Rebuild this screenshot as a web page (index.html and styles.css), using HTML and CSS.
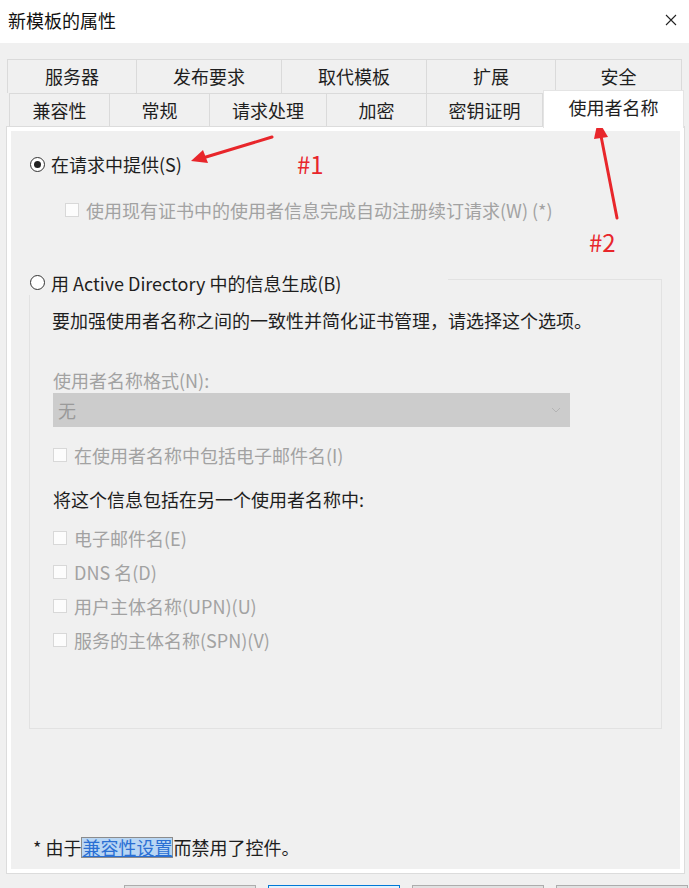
FILE: index.html
```html
<!DOCTYPE html>
<html lang="zh-CN">
<head>
    <meta charset="UTF-8">
    <meta name="viewport" content="width=device-width, initial-scale=1.0">
    <title>新模板的属性</title>
    <link rel="stylesheet" href="styles.css">
</head>
<body>
    <div class="dialog">
        <!-- title bar -->
        <div class="titlebar">
            <span class="title">新模板的属性</span>
            <svg class="close" width="12" height="12" viewBox="0 0 12 12">
                <path d="M1 1 L11 11 M11 1 L1 11" stroke="#222" stroke-width="1.1" fill="none"/>
            </svg>
        </div>

        <div class="sheet">
            <!-- tabs -->
            <div class="tabs">
                <div class="tab_row row1">
                    <div class="tab">服务器</div>
                    <div class="tab">发布要求</div>
                    <div class="tab">取代模板</div>
                    <div class="tab">扩展</div>
                    <div class="tab">安全</div>
                </div>
                <div class="tab_row row2">
                    <div class="tab">兼容性</div>
                    <div class="tab">常规</div>
                    <div class="tab">请求处理</div>
                    <div class="tab">加密</div>
                    <div class="tab">密钥证明</div>
                    <div class="tab active">使用者名称</div>
                </div>
            </div>

            <!-- tab page -->
            <div class="page">
                <div class="page_inner">
                    <div class="line radio_line first">
                        <span class="radio checked"></span>
                        <span>在请求中提供(S)</span>
                    </div>
                    <div class="line sub_line disabled">
                        <span class="check"></span>
                        <span>使用现有证书中的使用者信息完成自动注册续订请求(W) (*)</span>
                    </div>

                    <div class="group">
                        <div class="line group_label">
                            <span class="radio"></span>
                            <span>用 Active Directory 中的信息生成(B)</span>
                        </div>
                        <div class="group_body">
                            <div class="line desc">要加强使用者名称之间的一致性并简化证书管理，请选择这个选项。</div>
                            <div class="line disabled fmt_label">使用者名称格式(N):</div>
                            <div class="select">
                                <span>无</span>
                                <svg width="10" height="6" viewBox="0 0 10 6">
                                    <path d="M1 1 L5 5 L9 1" stroke="#b4b4b4" stroke-width="1" fill="none"/>
                                </svg>
                            </div>
                            <div class="line disabled email_line">
                                <span class="check"></span>
                                <span>在使用者名称中包括电子邮件名(I)</span>
                            </div>
                            <div class="line alt_label">将这个信息包括在另一个使用者名称中:</div>
                            <div class="alt_list">
                                <div class="line disabled"><span class="check"></span><span>电子邮件名(E)</span></div>
                                <div class="line disabled"><span class="check"></span><span>DNS 名(D)</span></div>
                                <div class="line disabled"><span class="check"></span><span>用户主体名称(UPN)(U)</span></div>
                                <div class="line disabled"><span class="check"></span><span>服务的主体名称(SPN)(V)</span></div>
                            </div>
                        </div>
                    </div>

                    <div class="line footer">* 由于<a class="link" href="#">兼容性设置</a>而禁用了控件。</div>
                </div>
            </div>

            <!-- dialog buttons (only their top edge is in view) -->
            <div class="buttons">
                <button class="btn"></button>
                <button class="btn default"></button>
                <button class="btn"></button>
                <button class="btn"></button>
            </div>
        </div>

        <!-- red annotations drawn over the dialog -->
        <svg class="annot" width="689" height="888" viewBox="0 0 689 888">
            <g stroke="#e8262b" stroke-width="3" stroke-linecap="round" fill="none">
                <path d="M272 137 L206 157"/>
                <path d="M617 218 L601 136"/>
            </g>
            <g fill="#e8262b">
                <polygon points="191,161 208,163 203,150"/>
                <polygon points="598,120 608,137 594,139"/>
            </g>
            <text x="297" y="174" class="mark">#1</text>
            <text x="589" y="252" class="mark">#2</text>
        </svg>
    </div>
</body>
</html>
```

FILE: styles.css
```css
*{
    margin: 0;
    padding: 0;
    box-sizing: border-box;
}
html,body{
    width: 689px;
    height: 888px;
    overflow: hidden;
}
body{
    font-family: "Noto Sans CJK SC", "Microsoft YaHei", sans-serif;
    font-size: 18px;
    color: #1e1e1e;
    background-color: #f0f0f0;
}
.dialog{
    position: relative;
    width: 689px;
    height: 888px;
}
.titlebar{
    height: 43px;
    background-color: white;
    display: flex;
    align-items: center;
    justify-content: space-between;
    padding: 0 12px 3px 8px;
}
.title{
    font-size: 18px;
    color: #111;
}
.sheet{
    padding-top: 16px;
}
/* tabs */
.tab_row{
    display: flex;
}
.tab{
    display: flex;
    align-items: center;
    justify-content: center;
    border-top: 1px solid #dadada;
    border-right: 1px solid #dadada;
    color: #1e1e1e;
}
.tab:first-child{
    border-left: 1px solid #dadada;
}
.row1{
    margin-left: 7px;
}
.row1 .tab{
    height: 34px;
    padding-bottom: 2px;
}
.row1 .tab:nth-child(1){ width: 130px; }
.row1 .tab:nth-child(2){ width: 145px; }
.row1 .tab:nth-child(3){ width: 145px; }
.row1 .tab:nth-child(4){ width: 129px; }
.row1 .tab:nth-child(5){ width: 126px; }
.row2{
    margin-left: 9px;
    height: 33px;
    align-items: flex-start;
}
.row2 .tab{
    height: 33px;
    padding-bottom: 1px;
}
.row2 .tab:nth-child(1){ width: 101px; }
.row2 .tab:nth-child(2){ width: 100px; }
.row2 .tab:nth-child(3){ width: 117px; }
.row2 .tab:nth-child(4){ width: 100px; }
.row2 .tab:nth-child(5){ width: 116px; }
.row2 .tab.active{
    position: relative;
    z-index: 2;
    width: 141px;
    height: 38px;
    margin-top: -3px;
    padding-bottom: 5px;
    background-color: white;
    border: 1px solid #e4e4e4;
    border-bottom: none;
}
/* page */
.page{
    margin-left: 6px;
    width: 679px;
    height: 748px;
    border: 1px solid #dcdcdc;
    background-color: white;
    padding: 4px 4px 4px 4px;
}
.page_inner{
    height: 100%;
    background-color: #f0f0f0;
    padding-left: 19px;
    display: flex;
    flex-direction: column;
}
.line{
    height: 24px;
    display: flex;
    align-items: center;
    white-space: nowrap;
}
.disabled{
    color: #a2a2a2;
}
.first{
    margin-top: 21px;
}
.radio{
    width: 15px;
    height: 15px;
    border-radius: 50%;
    border: 1px solid #333;
    background-color: white;
    margin-right: 6px;
    flex-shrink: 0;
    display: flex;
    align-items: center;
    justify-content: center;
}
.radio.checked::after{
    content: "";
    width: 7px;
    height: 7px;
    border-radius: 50%;
    background-color: #222;
}
.check{
    width: 14px;
    height: 14px;
    border: 1px solid #d8d8d8;
    background-color: #fcfcfc;
    margin-right: 7px;
    flex-shrink: 0;
}
.sub_line{
    margin-top: 22px;
    margin-left: 35px;
}
/* group box */
.group{
    margin-top: 57px;
    margin-left: -1px;
    width: 633px;
    height: 450px;
    border: 1px solid #e2e2e2;
}
.group_label{
    width: 421px;
    height: 25px;
    margin-top: -10px;
    margin-left: -3px;
    padding-left: 3px;
    background-color: #f0f0f0;
}
.group_body{
    padding-left: 23px;
}
.desc{
    margin-top: 13px;
    margin-left: -1px;
}
.fmt_label{
    margin-top: 36px;
}
.select{
    margin-top: 1px;
    width: 517px;
    height: 34px;
    background-color: #cccccc;
    color: #9a9a9a;
    display: flex;
    align-items: center;
    justify-content: space-between;
    padding: 0 9px 0 5px;
}
.email_line{
    margin-top: 16px;
}
.alt_label{
    margin-top: 20px;
}
.alt_list{
    margin-top: 15px;
    display: flex;
    flex-direction: column;
    gap: 10px;
}
.footer{
    margin-top: auto;
    margin-bottom: 10px;
    margin-left: 3px;
}
.link{
    height: 21px;
    line-height: 19px;
    color: #2a6fd3;
    background-color: #b8d6f4;
    border: 1px solid #8c8c8c;
    text-decoration: underline;
}
/* dialog buttons */
.buttons{
    display: flex;
    gap: 12px;
    padding-left: 124px;
    margin-top: 11px;
}
.btn{
    width: 132px;
    height: 30px;
    background-color: #e1e1e1;
    border: 1px solid #adadad;
}
.btn.default{
    border: 1px solid #0078d7;
    background-color: #e5f1fb;
}
/* annotations */
.annot{
    position: absolute;
    left: 0;
    top: 0;
    pointer-events: none;
}
.mark{
    font-family: "Noto Sans CJK SC", sans-serif;
    font-size: 24px;
    fill: #e8262b;
}
```
